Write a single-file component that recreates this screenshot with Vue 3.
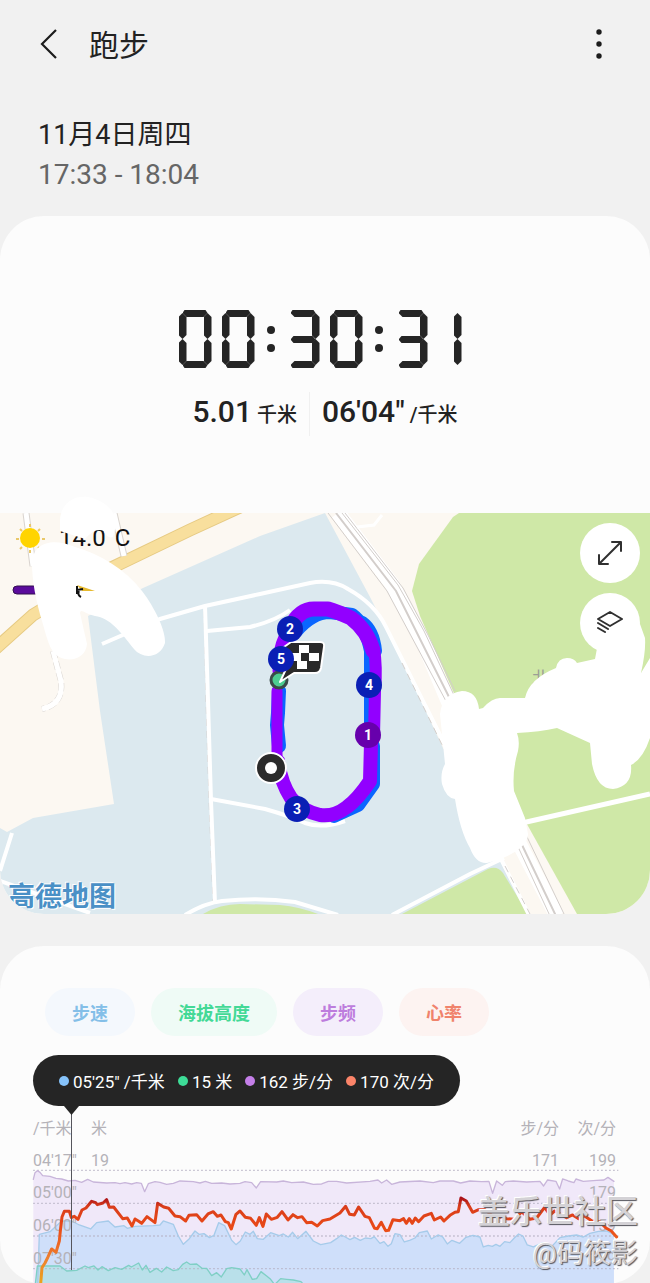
<script setup>
const time = '00:30:31'
const segmentMap = {
  0: ['top', 'tl', 'tr', 'bl', 'br', 'bottom'],
  1: ['tr', 'br'],
  3: ['top', 'mid', 'bottom', 'tr', 'br']
}
const cells = time.split('').map((ch, i) => ({ id: i, ch, segments: segmentMap[ch] || [] }))

const chips = [
  { label: '步速', tone: 'pace' },
  { label: '海拔高度', tone: 'altitude' },
  { label: '步频', tone: 'cadence' },
  { label: '心率', tone: 'heart' }
]
const readings = [
  { text: '05\'25" /千米', tone: 'pace' },
  { text: '15 米', tone: 'altitude' },
  { text: '162 步/分', tone: 'cadence' },
  { text: '170 次/分', tone: 'heart' }
]
const markers = [
  { n: 2, x: 290, y: 628 },
  { n: 5, x: 281, y: 658 },
  { n: 4, x: 369, y: 684 },
  { n: 1, x: 368, y: 734, alt: true },
  { n: 3, x: 297, y: 808 }
]
const flagSquares = [[299, 644], [291, 652], [309, 652], [297, 660]]

const cadence = '100,235 105,215 112,209 120,214 128,224 150,226 168,232 185,234 205,240 225,238 245,244 263,235 280,243 320,246 345,245 360,248 375,245 395,249 410,245 424,247 434,272 445,248 465,242 480,244 500,250 520,247 540,240 580,242 600,246 616,241 635,247 665,246 690,249 720,247 735,242 755,245 769,261 782,242 830,243 850,240 875,245 910,243 940,250 965,249 985,241 1010,241 1040,246 1110,241 1134,237 1145,246 1160,237 1175,250 1200,243 1260,240 1300,245 1320,240 1360,240 1382,246 1410,240 1445,242 1467,241 1478,277 1490,240 1507,253 1516,242 1540,240 1580,243 1620,241 1631,255 1643,237 1668,241 1679,264 1688,234 1705,240 1722,245 1728,234 1750,241 1790,238 1812,237 1824,229 1842,241'
const heart = '122,549 126,500 135,486 144,468 155,444 168,454 178,420 181,390 186,348 193,331 208,331 214,350 223,346 234,355 246,327 258,321 275,301 287,305 292,311 309,306 320,296 328,319 341,318 368,353 382,351 396,375 405,354 415,360 425,367 441,347 465,365 473,307 491,318 506,322 525,345 540,347 557,360 567,343 590,341 606,360 624,339 640,332 652,346 663,342 676,362 685,365 694,384 708,340 720,330 736,349 752,352 769,373 778,350 789,376 799,339 814,355 832,349 846,332 864,357 879,341 893,350 906,347 920,365 935,364 952,375 968,359 990,354 1020,336 1037,316 1049,340 1063,342 1076,318 1095,346 1108,350 1124,382 1132,383 1144,364 1157,389 1166,388 1179,356 1200,359 1211,353 1219,367 1228,353 1237,367 1246,351 1256,362 1272,345 1294,337 1303,357 1322,348 1332,360 1350,343 1365,334 1375,332 1383,291 1399,300 1418,334 1436,326 1455,326 1476,343 1500,348 1520,353 1545,355 1565,332 1590,355 1610,351 1634,319 1650,342 1664,330 1680,339 1700,350 1718,342 1736,353 1754,345 1776,360 1800,363 1818,381 1834,390 1850,408'
const pace = '113,549 118,400 150,392 185,360 215,360 238,372 272,384 290,365 325,360 345,378 372,374 382,382 405,376 460,374 480,372 490,360 520,370 535,405 550,430 568,413 585,390 597,400 612,398 628,410 642,403 656,365 674,374 695,418 708,431 721,420 736,393 750,400 760,391 772,413 790,415 812,395 838,404 850,399 865,408 878,394 893,413 918,391 940,420 962,431 992,425 1010,413 1024,402 1036,408 1050,416 1064,409 1081,418 1096,411 1113,413 1123,407 1140,427 1152,422 1164,436 1174,428 1185,398 1200,401 1213,423 1229,418 1245,411 1258,395 1282,390 1294,414 1314,402 1328,408 1342,429 1356,418 1379,427 1398,409 1419,403 1440,408 1450,438 1465,433 1477,436 1488,430 1500,436 1514,422 1530,425 1543,411 1556,399 1569,405 1582,432 1600,438 1630,425 1655,437 1680,410 1705,405 1730,402 1750,408 1770,397 1795,391 1820,390 1842,400'
const altitude = '106,549 112,495 180,495 200,510 230,508 255,495 265,500 282,495 294,507 306,497 325,509 345,500 365,505 386,493 394,498 416,486 427,507 438,493 450,514 469,502 485,513 500,498 520,509 535,506 548,490 560,483 570,490 590,489 606,502 620,502 635,524 650,515 664,528 680,503 695,500 720,504 733,522 741,506 757,535 770,533 783,512 800,525 812,535 824,551 842,533 860,535 880,537 903,542 920,560'
</script>

<template>
  <main class="screen">
    <header class="bar">
      <button class="icon-btn back" type="button" aria-label="返回">
        <svg width="20" height="32" viewBox="0 0 20 32"><path d="M17 2L3 16L17 30" fill="none" stroke="#1c1c1c" stroke-width="2.200" /></svg>
      </button>
      <h1>跑步</h1>
      <button class="icon-btn more" type="button" aria-label="更多">
        <svg width="8" height="32" viewBox="0 0 8 32" fill="#1c1c1c"><circle cx="4" cy="4" r="2.700" /><circle cx="4" cy="16" r="2.700" /><circle cx="4" cy="28" r="2.700" /></svg>
      </button>
    </header>

    <section class="when">
      <p class="date">11月4日周四</p>
      <p class="span">17:33 - 18:04</p>
    </section>

    <section class="card summary">
      <div class="clock" role="timer" :aria-label="time">
        <span v-for="c in cells" :key="c.id" :class="c.ch === ':' ? 'colon' : ['digit', { narrow: c.ch === '1' }]">
          <i v-for="s in c.segments" :key="s" :class="['seg', s]"></i>
        </span>
      </div>
      <div class="metrics">
        <p><strong>5.01</strong> <span>千米</span></p>
        <p><strong>06'04"</strong> <span>/千米</span></p>
      </div>

      <div class="map">
        <svg class="map-art" viewBox="0 490 650 423">
          <defs>
            <clipPath id="ground"><rect x="0" y="512" width="650" height="401" /></clipPath>
          </defs>
          <g clip-path="url(#ground)">
            <rect x="0" y="512" width="650" height="401" fill="#fcf8f2" />
            <path d="M325 512L260 535L143 587L88 615L100 710L114 803L33 817L7 831L0 827V913H528L502 860L443 747L400 655L370 596Z" fill="#dce9ef" />
            <g fill="#cfe8a7">
              <path d="M459 512L453 516L419 563L412 590L420 615L453 690L528 825L577 913H650V512Z" />
              <path d="M402 913L488 868Q497 864 503 872L528 913Z" />
              <path d="M203 913Q220 903 240 903L280 904Q300 906 318 913Z" />
            </g>
            <g fill="none">
              <path d="M-5 648L33 614L107 569L190 529L240 506" stroke="#e6ca83" stroke-width="13" />
              <path d="M-5 648L33 614L107 569L190 529L240 506" stroke="#f8df9d" stroke-width="11" />
              <path d="M26 512L33 565M114 512L124 555" stroke="#d9d4cf" stroke-width="7" />
              <path d="M26 512L33 565M114 512L124 555" stroke="#fff" stroke-width="5" />
              <path d="M53 650L61 680Q64 703 42 708" stroke="#d9d4cf" stroke-width="6" stroke-dasharray="8 3" />
              <path d="M53 650L61 680Q64 703 42 708" stroke="#fff" stroke-width="5" />
              <path d="M204 610L206 700L209 800L213 900" stroke="#d6d3d2" stroke-dasharray="7 5" />
              <g stroke="#fff" stroke-width="4">
                <path d="M102 643L160 618L205 605L260 593L310 582Q332 578 348 588Q375 603 386 626L443 740L502 860L530 916" />
                <path d="M205 605L208 700L211 800L215 903" />
                <path d="M207 630L250 626Q275 620 290 609" />
                <path d="M211 798L265 808Q290 815 305 822Q322 828 345 820" />
                <path d="M185 914Q205 902 222 900Q260 896 295 901L338 914M0 880L90 912M12 832L0 870" />
                <path d="M392 914L470 873L504 857" />
                <path d="M522 822L650 793" stroke-width="5" />
              </g>
              <path d="M338 512L392 583L424 643L449 702L522 848L557 915" stroke="#fff" stroke-width="15" />
              <g stroke="#d3cecb" stroke-width="1">
                <path d="M328 512L387 590L447 702L520 850L550 915" />
                <path d="M336 512L396 590L450 698L523 846L556 915" stroke-width="2" />
                <path d="M342 512L398 584L424 630L453 692L528 838L565 915" />
                <path d="M345 512L403 587L428 634L455 690" />
                <path d="M402 662L445 750M505 865L530 913" stroke-dasharray="7 5" />
              </g>
              <path d="M357 526L374 524L382 514" stroke="#fff" stroke-width="3" />
            </g>
          </g>

          <g stroke-linejoin="round" stroke-linecap="round" fill="none">
            <g stroke="#0a66ff">
              <path d="M279 690L278 712L277 724L279 745M296 630Q312 611 330 611L352 614Q366 624 371 650L371 722" stroke-width="14" />
              <path d="M362 622Q373 630 375 650M373 745L373 783L358 804L334 815" stroke-width="14" />
            </g>
            <g stroke="#9200ff">
              <path d="M277 690L277 755" stroke-width="11" />
              <path d="M279 670L281 648Q283 638 290 628" stroke-width="13" />
              <path d="M290 627Q299 608 314 608L328 608Q338 611 351 617Q368 630 373 650" stroke-width="15" />
              <path d="M374 648Q377 665 375 690L374 735" stroke-width="12" />
              <path d="M371 742L370 780Q358 798 347 806Q334 816 320 814Q302 810 291 797Q281 782 278 760" stroke-width="14" />
            </g>
          </g>

          <circle cx="279" cy="679" r="8" fill="#4dcc91" stroke="#3b4a48" stroke-width="3" />
          <path d="M291 641H320Q325 641 324 646L321 667Q320 672 315 672H294L280 681L286 668L284 646Z" fill="#292929" stroke="#fff" stroke-width="2" stroke-linejoin="round" />
          <rect v-for="(s, i) in flagSquares" :key="i" :x="s[0]" :y="s[1]" width="10" height="8" fill="#fff" />
          <circle cx="271" cy="767" r="15" fill="#2b2b2b" stroke="#fff" stroke-width="2" />
          <circle cx="271" cy="767" r="6" fill="#fff" />
          <g v-for="m in markers" :key="m.n">
            <circle :cx="m.x" :cy="m.y" r="13" :fill="m.alt ? '#6700ac' : '#0a1fb5'" />
            <text class="marker" :x="m.x" :y="m.y + 5">{{ m.n }}</text>
          </g>

          <g stroke="#e9c86a" stroke-width="2">
            <path d="M30 523V526M30 549V552M16 538H19M42 538H45M20 528L22 530M38 546L40 548M40 528L38 530M20 548L22 546" />
          </g>
          <circle cx="30" cy="537" r="10" fill="#ffd400" />
          <text class="temp" x="59" y="545">14.0°C</text>
          <path d="M36 585H17Q13 585 13 589Q13 593 17 593H36Z" fill="#5b0c9c" stroke="#33104f" />
          <text class="place" x="532" y="684">北</text>
          <g fill="#fff">
            <path d="M60 518C62 500 76 494 88 496C103 499 114 508 117 521L113 536Q107 538 104 530Q95 526 85 538L60 530Z" />
            <path d="M32 562C33 540 55 537 75 546C100 553 125 568 142 590C155 607 166 630 165 642C160 658 142 658 134 648C120 630 110 617 95 615C85 613 81 607 80 612L87 643C86 655 75 660 65 658C50 655 48 640 42 620C36 600 32 580 32 562Z" />
            <path d="M598 642L595 658L577 662Q574 657 567 657Q558 657 556 667Q529 678 525 697L500 697Q492 697 483 707L479 708Q477 690 462 690Q442 693 440 713L445 763Q440 772 442 783Q446 797 455 798Q460 830 470 847Q476 863 487 862Q510 856 520 847Q528 841 528 833L525 817L514 790Q512 770 518 750Q520 740 517 732Q540 731 557 727L590 742L592 763Q597 788 613 788Q633 785 631 764Q643 758 650 737V657L641 672Q646 650 645 637L640 623Z" />
          </g>
          <path d="M77 584L95 590L82 590Z" fill="#e6b92e" />
          <path d="M77 585V593M77 589L83 588M79 590Q77 594 81 596" fill="none" stroke="#111" stroke-width="2" />
        </svg>
        <span class="provider">高德地图</span>
        <div class="map-tools">
          <button type="button" aria-label="展开地图">
            <svg width="26" height="26" viewBox="0 0 26 26" fill="none" stroke="#303030" stroke-width="2" stroke-linecap="round" stroke-linejoin="round"><path d="M3 23L23 3M15 2H24V11M2 15V24H11" /></svg>
          </button>
          <button type="button" aria-label="图层">
            <svg width="26" height="26" viewBox="0 0 26 26" fill="none" stroke="#303030" stroke-width="2" stroke-linecap="round" stroke-linejoin="round"><path d="M13 2L25 9L13 16L1 9ZM1 13L11 19M1 18L8 22" /></svg>
          </button>
        </div>
      </div>
    </section>

    <section class="card stats">
      <div class="chips">
        <button v-for="c in chips" :key="c.tone" type="button" :class="['chip', c.tone]">{{ c.label }}</button>
      </div>
      <div class="tip">
        <span v-for="r in readings" :key="r.tone" :class="['reading', r.tone]">{{ r.text }}</span>
      </div>
      <svg class="chart" viewBox="0 0 650 178">
        <g transform="scale(.3333) translate(0 -15)">
          <polygon :points="`100,549 ${cadence} 1842,549`" fill="#f0e8f9" />
          <polygon :points="`${pace} 1842,549`" fill="#cfdffa" />
          <polygon :points="altitude" fill="#b9e0ea" />
          <path d="M100 208H1855M100 307H1855M100 405H1855M100 503H1855" stroke="#b5b0c2" stroke-width="4" stroke-dasharray="4 8" />
          <g fill="none" stroke-linejoin="round" stroke-linecap="round">
            <polyline :points="cadence" stroke="#c8b5da" stroke-width="4" />
            <polyline :points="pace" stroke="#a6cbea" stroke-width="4" />
            <polyline :points="altitude" stroke="#7fcfc5" stroke-width="4" />
          </g>
        </g>
        <g class="axis">
          <text x="33" y="28">/千米</text>
          <text x="91" y="28">米</text>
          <text x="33" y="60">04'17"</text>
          <text x="91" y="60">19</text>
          <text x="33" y="92">05'00"</text>
          <text x="33" y="125">06'00"</text>
          <text x="33" y="158">07'30"</text>
          <g class="end">
            <text x="559" y="28">步/分</text>
            <text x="616" y="28">次/分</text>
            <text x="559" y="60">171</text>
            <text x="616" y="60">199</text>
            <text x="616" y="92">179</text>
            <text x="616" y="125">159</text>
            <text x="616" y="158">139</text>
          </g>
        </g>
        <defs>
          <linearGradient id="heat" gradientUnits="userSpaceOnUse" x1="0" y1="290" x2="0" y2="549">
            <stop offset="0" stop-color="#a80f18" />
            <stop offset=".1" stop-color="#d93d1b" />
            <stop offset=".35" stop-color="#ea4a17" />
            <stop offset=".7" stop-color="#ee8030" />
            <stop offset="1" stop-color="#eba51d" />
          </linearGradient>
        </defs>
        <polyline :points="heart" transform="scale(.3333) translate(0 -15)" fill="none" stroke="url(#heat)" stroke-width="9" stroke-linejoin="round" stroke-linecap="round" />
        <path d="M71.500 6V164" stroke="#55555c" />
        <path d="M64 0H79L71.500 9Z" fill="#252525" />
      </svg>
      <div class="credit">
        <p class="community">盖乐世社区</p>
        <p class="author">@码筱影</p>
      </div>
    </section>
  </main>
</template>

<style>
body {
  margin: 0;
  background: #f1f1f1;
}
</style>

<style scoped>
.screen {
  font-family: Roboto, "Noto Sans CJK SC", sans-serif;
  color: #222;
  background: #f1f1f1;
  overflow: hidden;
}
h1,
p {
  margin: 0;
  font-weight: 400;
}
button {
  font: inherit;
  border: 0;
  padding: 0;
  cursor: pointer;
}
.bar {
  display: flex;
  align-items: center;
  height: 88px;
  padding: 0 47px 0 39px;
}
.icon-btn {
  display: flex;
  background: none;
}
h1 {
  flex: 1;
  margin-left: 30px;
  padding-top: 4px;
  font-size: 30px;
  line-height: 40px;
}
.when {
  padding: 28px 38px 22px;
  line-height: 39px;
}
.date {
  font-size: 27px;
}
.span {
  font-size: 28px;
  color: #666;
}
.card {
  position: relative;
  background: #fcfcfc;
  border-radius: 44px;
  overflow: hidden;
}
.summary {
  padding-top: 94px;
}
.clock {
  display: flex;
  justify-content: center;
  gap: 10px;
  padding-right: 10px;
}
.digit {
  position: relative;
  width: 33px;
  height: 58px;
}
.digit.narrow {
  width: 24px;
}
.colon {
  display: flex;
  flex-direction: column;
  align-items: center;
  justify-content: center;
  gap: 10px;
  width: 12px;
  height: 58px;
}
.colon::before,
.colon::after {
  content: "";
  width: 8px;
  height: 8px;
  border-radius: 50%;
  background: #252525;
}
.seg {
  position: absolute;
  background: #252525;
}
.top,
.mid,
.bottom {
  left: 4px;
  right: 4px;
  height: 7px;
}
.top {
  top: 0;
  clip-path: polygon(2px 0, calc(100% - 2px) 0, 100% 3px, calc(100% - 4px) 100%, 4px 100%, 0 3px);
}
.mid {
  top: 26px;
  clip-path: polygon(3px 0, calc(100% - 3px) 0, 100% 50%, calc(100% - 3px) 100%, 3px 100%, 0 50%);
}
.bottom {
  bottom: 0;
  clip-path: polygon(4px 0, calc(100% - 4px) 0, 100% 4px, calc(100% - 2px) 100%, 2px 100%, 0 4px);
}
.tl,
.tr,
.bl,
.br {
  width: 8px;
  height: 26px;
  clip-path: polygon(50% 0, 100% 4px, 100% calc(100% - 4px), 50% 100%, 0 calc(100% - 4px), 0 4px);
}
.tl,
.tr {
  top: 3px;
}
.bl,
.br {
  bottom: 3px;
}
.tl,
.bl {
  left: 0;
}
.tr,
.br {
  right: 0;
}
.metrics {
  display: flex;
  justify-content: center;
  height: 44px;
  margin-top: 24px;
  line-height: 40px;
  font-size: 20px;
}
.metrics p {
  font-weight: 500;
  padding: 0 12px;
}
.metrics p + p {
  border-left: 1px solid #f0f0f0;
}
.metrics strong {
  font-size: 30px;
  font-weight: 500;
}
.map {
  position: relative;
  margin-top: 55px;
}
.map-art {
  display: block;
  width: 100%;
  height: auto;
}
.marker {
  font-size: 14px;
  font-weight: 700;
  fill: #fff;
  text-anchor: middle;
}
.temp {
  font-size: 24px;
  fill: #111;
}
.place {
  font-size: 18px;
  fill: #9c9f96;
}
.provider {
  position: absolute;
  left: 8px;
  bottom: 1px;
  font-size: 27px;
  line-height: 32px;
  font-weight: 700;
  color: #4a90c6;
  text-shadow: 1px 1px #fff, -1px -1px #fff;
}
.map-tools {
  position: absolute;
  top: 32px;
  right: 10px;
  display: grid;
  gap: 10px;
}
.map-tools button {
  display: grid;
  place-items: center;
  width: 60px;
  height: 60px;
  border-radius: 50%;
  background: #fff;
}
.stats {
  margin-top: 32px;
  padding-top: 42px;
}
.chips {
  display: flex;
  gap: 16px;
  padding: 0 45px;
}
.chip {
  height: 48px;
  padding: 0 27px;
  border-radius: 24px;
  font-size: 18px;
  font-weight: 700;
}
.chip.pace {
  color: #84bfe8;
  background: #f4f8fd;
}
.chip.altitude {
  color: #43d996;
  background: #effbf6;
}
.chip.cadence {
  color: #bd7ddd;
  background: #f4eefb;
}
.chip.heart {
  color: #f0836c;
  background: #fdf3f1;
}
.tip {
  display: flex;
  align-items: center;
  gap: 13px;
  width: max-content;
  height: 51px;
  margin: 19px 0 0 33px;
  padding: 0 26px;
  border-radius: 26px;
  background: #252525;
  color: #fff;
  font-size: 17px;
}
.reading {
  display: flex;
  align-items: center;
  gap: 4px;
  white-space: pre;
}
.reading::before {
  content: "";
  width: 10px;
  height: 10px;
  border-radius: 50%;
  background: currentColor;
}
.reading.pace::before {
  background: #86c3fb;
}
.reading.altitude::before {
  background: #3ddc97;
}
.reading.cadence::before {
  background: #c47fe8;
}
.reading.heart::before {
  background: #fb8469;
}
.chart {
  display: block;
  width: 100%;
  height: auto;
}
.axis {
  font-size: 16px;
  fill: #b4b2b8;
}
.end {
  text-anchor: end;
}
.credit {
  position: absolute;
  right: 12px;
  bottom: 10px;
  text-align: right;
  color: #d4d2d6;
  text-shadow: 1px 1px 1px #55555c, -1px -1px #fff;
}
.community {
  font-size: 32px;
  line-height: 44px;
  font-weight: 500;
}
.author {
  font-size: 27px;
  line-height: 40px;
}
</style>
